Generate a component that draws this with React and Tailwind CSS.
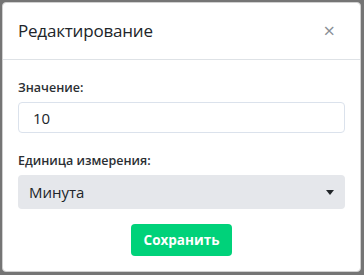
import React, { useState } from 'react';

export default function App() {
  const [value, setValue] = useState('10');
  const [unit, setUnit] = useState('Минута');

  return (
    <div className="w-[364px] h-[275px] bg-[#757575] pt-[2px] pl-[2px] pr-[3px] pb-[3px]" style={{ fontFamily: '"Open Sans", "Noto Sans", sans-serif' }}>
      <div className="h-full w-full bg-white rounded-[4px] border border-[#d0d0d0] flex flex-col">
        {/* Header */}
        <div className="h-[57px] flex items-center justify-between pl-[15px] pr-[25px] border-b border-[#dee2e6] shrink-0">
          <h5 className="text-[17px] text-[#212529] tracking-[-0.2px]">Редактирование</h5>
          <button type="button" className="text-[#8a8f96] text-[20px] leading-none font-medium">×</button>
        </div>

        {/* Body */}
        <div className="px-[15px] pt-[18px] flex flex-col">
          <label className="text-[12.5px] font-semibold text-[#2b2f33] leading-[20px]">Значение:</label>
          <input
            type="text"
            value={value}
            onChange={(e) => setValue(e.target.value)}
            className="mt-[4px] h-[31px] w-full border border-[#dbe2ec] rounded-[4px] px-[14px] text-[15px] text-[#212529] outline-none"
          />

          <label className="mt-[18px] text-[12.5px] font-semibold text-[#2b2f33] leading-[20px]">Единица измерения:</label>
          <div className="relative mt-[4px]">
            <select
              value={unit}
              onChange={(e) => setUnit(e.target.value)}
              className="appearance-none h-[34px] w-full bg-[#e5e7eb] rounded-[4px] pl-[11px] text-[15px] text-[#212529] outline-none"
            >
              <option>Минута</option>
              <option>Час</option>
              <option>День</option>
            </select>
            <svg className="absolute right-[10px] top-[14px] pointer-events-none" width="10" height="7" viewBox="0 0 10 7">
              <path d="M1 1h8L5 6z" fill="#212529" />
            </svg>
          </div>

          <div className="flex justify-center mt-[15px]">
            <button type="button" className="w-[101px] h-[32px] bg-[#00d27a] rounded-[4px] text-white text-[13.5px] font-bold">
              Сохранить
            </button>
          </div>
        </div>
      </div>
    </div>
  );
}
